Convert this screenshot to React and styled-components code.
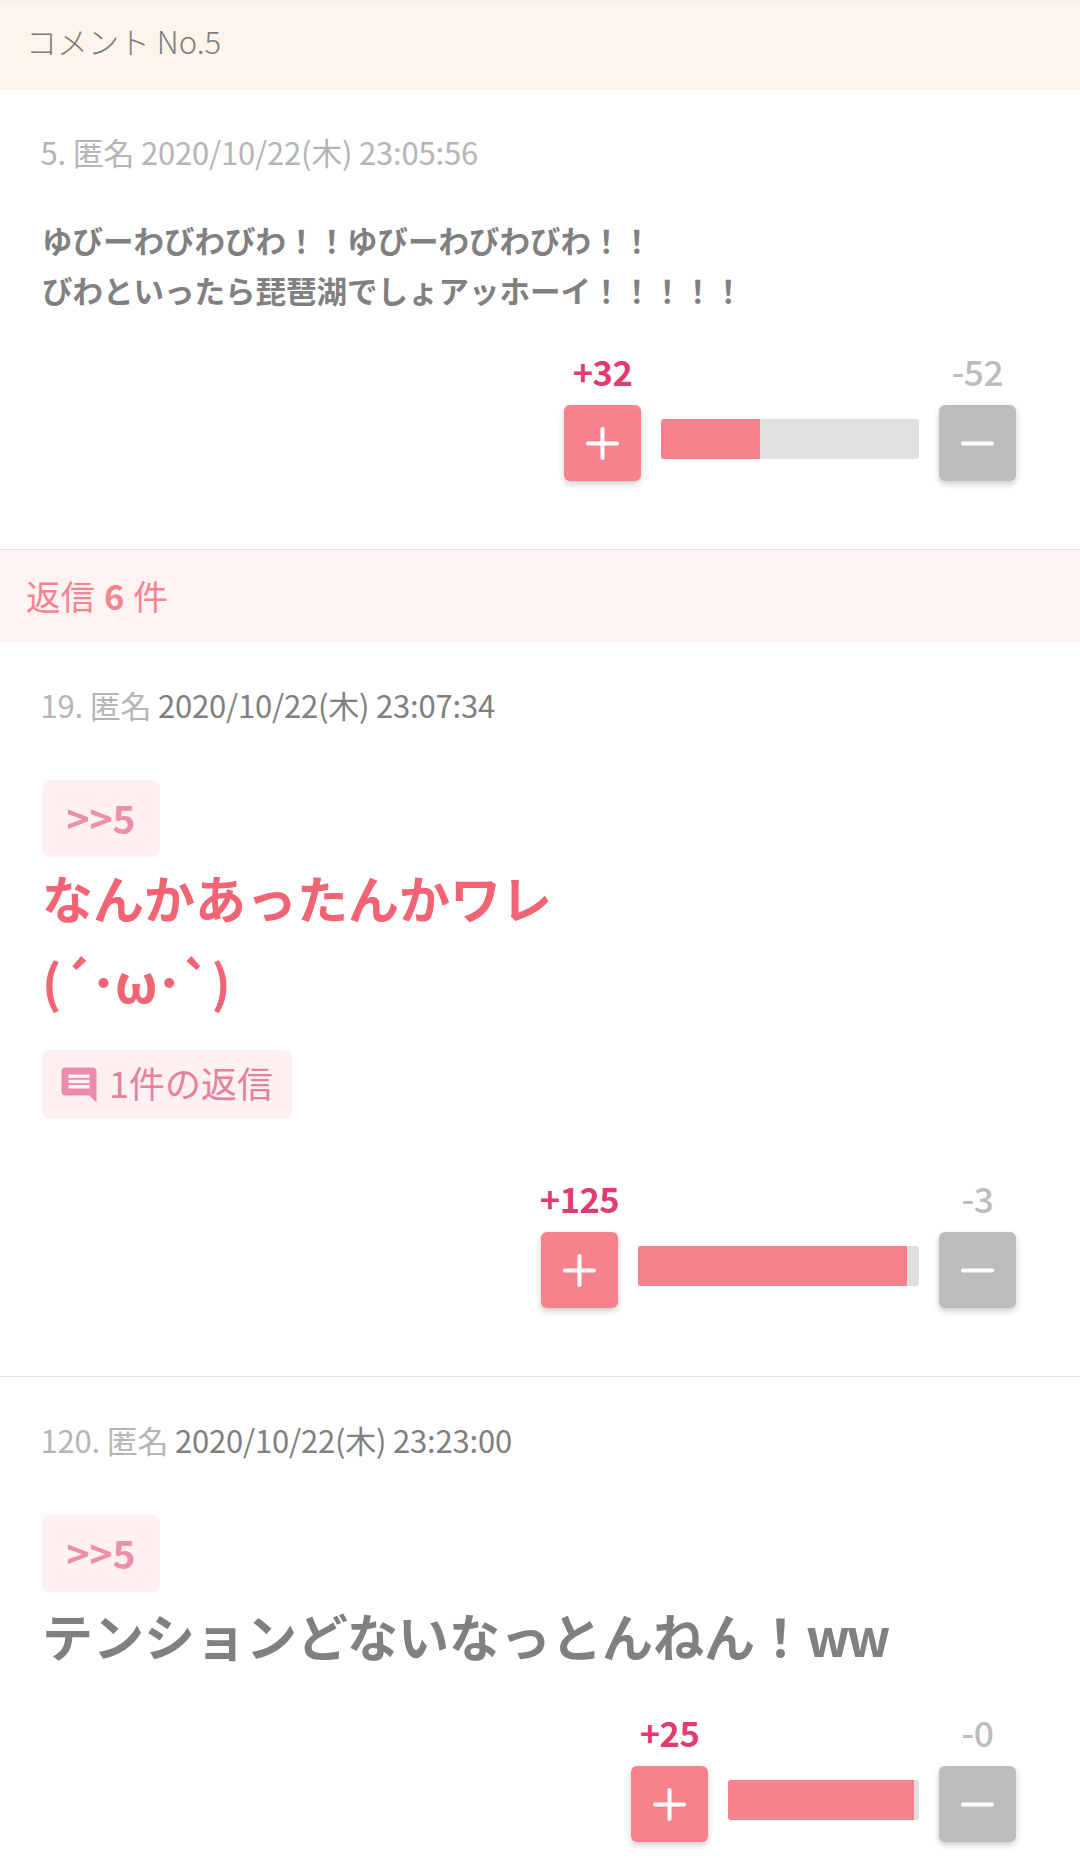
import styled, { createGlobalStyle } from "styled-components";

const GlobalStyle = createGlobalStyle`
  html, body {
    margin: 0;
    padding: 0;
    background: #ffffff;
    font-family: "Noto Sans CJK JP", "Noto Sans", sans-serif;
  }
`;

const Page = styled.div`
  width: 1080px;
  height: 1869px;
  overflow: hidden;
`;

const CommentBar = styled.header`
  height: 87px;
  padding-left: 26px;
  display: flex;
  align-items: center;
  background: #fdf5ec;
  border-top: 3px solid #f5efe8;
  font-size: 31px;
  font-weight: 300;
  color: #7d7d7d;

  span {
    margin-bottom: 13px;
  }
`;

const ReplyBar = styled.h2`
  margin: 0;
  height: 90px;
  padding: 0 0 2px 26px;
  display: flex;
  align-items: center;
  gap: 9px;
  background: #fff2f2;
  border-top: 1px solid #e2e2e2;
  font-size: 34.5px;
  font-weight: 400;
  color: #f2858f;

  b {
    font-weight: 700;
  }
`;

const Post = styled.article`
  padding: ${(p) => p.$top}px 64px 0 42px;
  height: ${(p) => p.$height}px;
  box-sizing: border-box;
  border-bottom: ${(p) => (p.$divider ? "1px solid #e2e2e2" : "none")};
`;

const Meta = styled.div`
  font-size: 31px;
  line-height: 44px;
  color: #b5b5b5;
  letter-spacing: -0.2px;
  margin-left: -1.5px;
`;

const MetaDate = styled.span`
  color: ${(p) => (p.$muted ? "#b5b5b5" : "#808080")};
`;

const SmallBody = styled.p`
  margin: 41px 0 0;
  font-size: 30.5px;
  line-height: 50px;
  font-weight: 700;
  color: #808080;
`;

const QuoteChip = styled.div`
  margin-top: 53px;
  width: 118px;
  height: 77px;
  padding-bottom: 4px;
  box-sizing: border-box;
  display: flex;
  align-items: center;
  justify-content: center;
  border-radius: 8px;
  background: #fff0f2;
  color: #ec8fa8;
  font-size: 39px;
  font-weight: 700;
`;

const BigBody = styled.p`
  margin: ${(p) => p.$top}px 0 0;
  font-size: 51px;
  line-height: 84px;
  font-weight: 700;
  color: ${(p) => (p.$accent ? "#f16474" : "#808080")};
`;

const TightText = styled.span`
  letter-spacing: ${(p) => p.$spacing}px;
`;

const RepliesChip = styled.div`
  margin-top: 27px;
  width: 250px;
  height: 69px;
  box-sizing: border-box;
  padding: 0 0 6px 16px;
  display: flex;
  align-items: center;
  gap: 9px;
  border-radius: 8px;
  background: #fff0f2;
  color: #e5829b;
  font-size: 36px;

  svg {
    width: 42px;
    height: 42px;
    margin-top: 6px;
    fill: #ea8bab;
  }
`;

const VoteRow = styled.div`
  margin-top: ${(p) => p.$top}px;
  display: flex;
  justify-content: flex-end;
  align-items: flex-end;
  gap: 20px;
`;

const VoteColumn = styled.div`
  width: 77px;
  display: flex;
  flex-direction: column;
  align-items: center;
  gap: 10px;
`;

const VoteCount = styled.span`
  height: 48px;
  line-height: 48px;
  white-space: nowrap;
  letter-spacing: -0.5px;
  font-size: ${(p) => (p.$up ? 34.5 : 35.5)}px;
  font-weight: ${(p) => (p.$up ? 700 : 500)};
  color: ${(p) => (p.$up ? "#e23b72" : "#bdbdbd")};
`;

const VoteButton = styled.button`
  width: 77px;
  height: 76px;
  padding: 0;
  border: none;
  border-radius: 6px;
  display: flex;
  align-items: center;
  justify-content: center;
  background: ${(p) => (p.$up ? "#f6828e" : "#bdbdbd")};
  box-shadow: 0 3px 6px rgba(0, 0, 0, 0.2);

  svg {
    width: 33px;
    height: 33px;
    stroke: #ffffff;
    stroke-width: 4;
    stroke-linecap: round;
  }
`;

const RatioBar = styled.div`
  width: ${(p) => p.$width}px;
  height: 40px;
  margin-bottom: 22px;
  border-radius: 3px;
  overflow: hidden;
  background: #e0e0e0;
`;

const RatioFill = styled.div`
  height: 100%;
  background: #f6828e;
`;

const PlusIcon = () => (
  <svg viewBox="0 0 33 33">
    <path d="M2 16.5h29M16.5 2v29" />
  </svg>
);

const MinusIcon = () => (
  <svg viewBox="0 0 33 33">
    <path d="M2 16.5h29" />
  </svg>
);

const Votes = ({ up, down, barWidth, fill, top }) => (
  <VoteRow $top={top}>
    <VoteColumn>
      <VoteCount $up>{up}</VoteCount>
      <VoteButton $up>
        <PlusIcon />
      </VoteButton>
    </VoteColumn>
    <RatioBar $width={barWidth}>
      <RatioFill style={{ width: `${fill}px` }} />
    </RatioBar>
    <VoteColumn>
      <VoteCount>{down}</VoteCount>
      <VoteButton>
        <MinusIcon />
      </VoteButton>
    </VoteColumn>
  </VoteRow>
);

export default function App() {
  return (
    <Page>
      <GlobalStyle />
      <CommentBar>
        <span>コメント No.5</span>
      </CommentBar>
      <Post $top={40} $height={459}>
        <Meta>
          5. 匿名 <MetaDate $muted>2020/10/22(木) 23:05:56</MetaDate>
        </Meta>
        <SmallBody>
          ゆびーわびわびわ！！ゆびーわびわびわ！！
          <br />
          びわといったら琵琶湖でしょアッホーイ！！！！！
        </SmallBody>
        <Votes up="+32" down="-52" barWidth={258} fill={99} top={32} />
      </Post>
      <ReplyBar>
        <span>返信</span>
        <b>6</b>
        <span>件</span>
      </ReplyBar>
      <Post $top={41} $height={735} $divider>
        <Meta>
          19. 匿名 <MetaDate>2020/10/22(木) 23:07:34</MetaDate>
        </Meta>
        <QuoteChip>&gt;&gt;5</QuoteChip>
        <BigBody $accent $top={-2}>
          なんかあったんかワレ
          <br />
          <TightText $spacing={-1.2}>(´･ω･`)</TightText>
        </BigBody>
        <RepliesChip>
          <svg viewBox="0 0 24 24">
            <path d="M21.99 4c0-1.1-.89-2-1.99-2H4c-1.1 0-2 .9-2 2v12c0 1.1.9 2 2 2h14l4 4-.01-18zM18 14H6v-2h12v2zm0-3H6V9h12v2zm0-3H6V6h12v2z" />
          </svg>
          1件の返信
        </RepliesChip>
        <Votes up="+125" down="-3" barWidth={281} fill={269} top={55} />
      </Post>
      <Post $top={41} $height={492}>
        <Meta>
          120. 匿名 <MetaDate>2020/10/22(木) 23:23:00</MetaDate>
        </Meta>
        <QuoteChip>&gt;&gt;5</QuoteChip>
        <BigBody $top={1}>
          テンションどないなっとんねん！
          <TightText $spacing={-3.5}>ww</TightText>
        </BigBody>
        <Votes up="+25" down="-0" barWidth={191} fill={186} top={31} />
      </Post>
    </Page>
  );
}
